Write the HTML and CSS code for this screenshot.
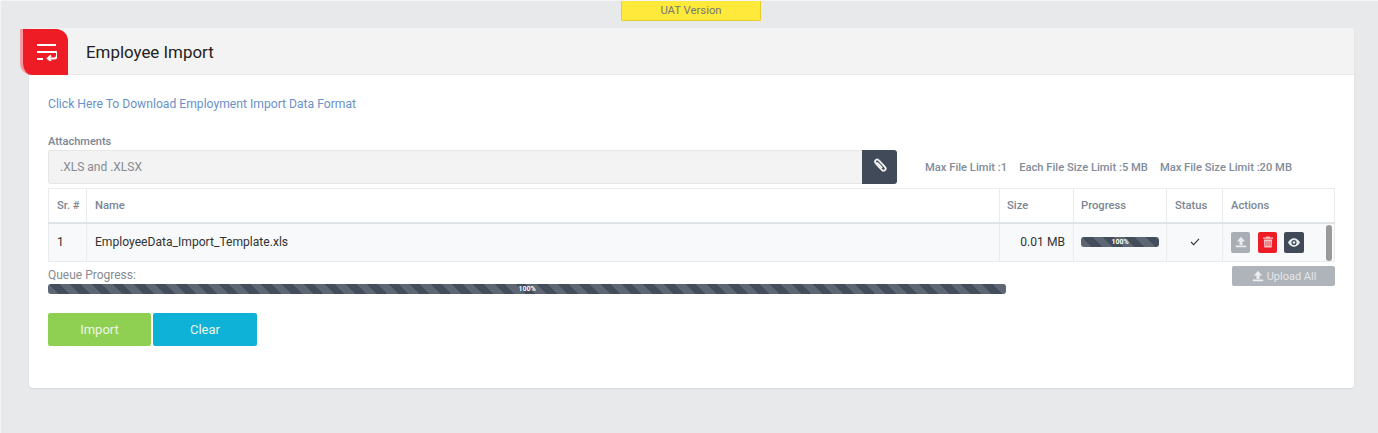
FILE: index.html
```html
<!DOCTYPE html>
<html lang="en">
<head>
  <meta charset="UTF-8" />
  <title>Employee Import</title>
  <link rel="stylesheet" href="styles.css">
</head>
<body>
  <div class="uat">UAT Version</div>

  <div class="card">
    <div class="card-head">
      <div class="head-icon">
        <svg width="20" height="18" viewBox="0 0 20 18" fill="none" stroke="#fff" stroke-width="2">
          <path d="M0 2h19"/>
          <path d="M0 9h19c1 0 1 .5 1 1.500v1.500c0 2-1 3.500-3 3.500H11"/>
          <path d="M0 16h6"/>
          <path d="M14 12.500l-3.200 3 3.200 2.500"/>
        </svg>
      </div>
      <h1>Employee Import</h1>
    </div>

    <div class="card-body">
      <a class="download" href="#">Click Here To Download Employment Import Data Format</a>

      <label class="attach-label">Attachments</label>
      <div class="attach-row">
        <div class="attach-input">.XLS and .XLSX</div>
        <button class="attach-btn">
          <svg width="14" height="15" viewBox="0 0 14 15">
            <path d="M2.200 1.700c1.100-1.100 2.800-1.100 3.900 0l6.300 6.800c1.200 1.300 1.200 3 .1 4.100s-2.900 1-4-.2L3.300 7.100c-.7-.8-.7-1.700-.1-2.300s1.500-.5 2.200.2l4 4.400-.9.800-4-4.300c-.4-.4-.7 0-.3.400l5.100 5.300c.7.700 1.700.8 2.300.2s.6-1.600-.1-2.400L5.200 2.600c-.6-.6-1.500-.6-2.100 0s-.6 1.500 0 2.100l-.9.900c-1.100-1.100-1.100-2.800 0-3.900z" fill="#fff" stroke="#fff" stroke-width=".6"/>
          </svg>
        </button>
        <div class="limits">
          <span>Max File Limit :1</span>
          <span>Each File Size Limit :5 MB</span>
          <span>Max File Size Limit :20 MB</span>
        </div>
      </div>

      <table class="files">
        <thead>
          <tr>
            <th class="c-sr">Sr. #</th>
            <th>Name</th>
            <th class="c-size">Size</th>
            <th class="c-prog">Progress</th>
            <th class="c-status">Status</th>
            <th class="c-act">Actions</th>
          </tr>
        </thead>
        <tbody>
          <tr>
            <td>1</td>
            <td>EmployeeData_Import_Template.xls</td>
            <td class="right">0.01 MB</td>
            <td class="prog-cell"><div class="bar bar-small">100%</div></td>
            <td class="center">
              <svg width="10" height="8" viewBox="0 0 11 9" fill="none" stroke="#333" stroke-width="1.200"><path d="M1 4.500l3 3 6-6.500"/></svg>
            </td>
            <td class="actions-cell">
              <div class="actions">
                <button class="act act-grey">
                  <svg width="14" height="14" viewBox="0 0 24 24"><path d="M3 21h18v-3H3v3zm2-10h4.500v6h5v-6H19l-7-8-7 8z" fill="#e9ebed"/></svg>
                </button>
                <button class="act act-red">
                  <svg width="10" height="12" viewBox="0 0 12 13"><path d="M4 0h4l.5 1H12v1.500H0V1h3.500L4 0zM1 3.500h10l-.6 9.500H1.600L1 3.500zm2 2v5.500h1V5.500H3zm2.500 0v5.500h1V5.500h-1zm2.500 0v5.500h1V5.500H8z" fill="#f7c6c8"/></svg>
                </button>
                <button class="act act-dark">
                  <svg width="12" height="9" viewBox="0 0 14 10"><path d="M7 0c3 0 5.500 2 7 5-1.500 3-4 5-7 5S1.500 8 0 5c1.500-3 4-5 7-5zm0 2a3 3 0 1 0 0 6 3 3 0 0 0 0-6zm0 1.500a1.500 1.500 0 1 1 0 3 1.500 1.500 0 0 1 0-3z" fill="#e9ebed"/></svg>
                </button>
              </div>
              <div class="scroll-thumb"></div>
            </td>
          </tr>
        </tbody>
      </table>

      <div class="queue">
        <div class="queue-left">
          <div class="queue-label">Queue Progress:</div>
          <div class="bar bar-queue">100%</div>
        </div>
        <button class="upload-all">
          <svg width="14" height="14" viewBox="0 0 24 24"><path d="M3 21h18v-3H3v3zm2-10h4.500v6h5v-6H19l-7-8-7 8z" fill="#eceef0"/></svg>
          Upload All
        </button>
      </div>

      <div class="form-btns">
        <button class="btn btn-import">Import</button>
        <button class="btn btn-clear">Clear</button>
      </div>
    </div>
  </div>
</body>
</html>
```

FILE: styles.css
```css
* {
  box-sizing: border-box;
}

body {
  margin: 0;
  padding: 0 24px 0 28px;
  height: 433px;
  overflow: hidden;
  border-top: 1px solid #f4f4f5;
  border-left: 1px solid #f4f4f5;
  font-family: Roboto, "Liberation Sans", sans-serif;
  background: #e8e9eb;
  color: #333;
}

button {
  font-family: inherit;
  border: none;
  cursor: pointer;
}

.uat {
  width: 140px;
  height: 20px;
  margin-left: 592px;
  background: #ffe93b;
  border: 1px solid #e6cf2a;
  border-top: none;
  border-radius: 0 0 2px 2px;
  color: #777;
  font-size: 11.300px;
  line-height: 20px;
  text-align: center;
}

.card {
  margin-top: 7px;
  height: 360px;
  background: #fff;
  border-radius: 4px;
  box-shadow: 0 1px 2px rgba(0, 0, 0, 0.08);
}

.card-head {
  display: flex;
  align-items: flex-end;
  height: 47px;
  background: #f3f3f3;
  border-bottom: 1px solid #e9e9e9;
  border-radius: 4px 4px 0 0;
}

.head-icon {
  display: flex;
  align-items: center;
  justify-content: center;
  flex: none;
  width: 48px;
  height: 46px;
  margin-left: -9px;
  margin-bottom: -1px;
  padding-left: 3px;
  background: #ee1c25;
  border-left: 3px solid #f29aa0;
  border-radius: 0 12px 0 12px;
}

.card-head h1 {
  align-self: center;
  margin: 2px 0 0 18px;
  font-size: 16.900px;
  font-weight: 400;
  color: #222;
}

.card-body {
  padding: 22px 19px 0;
}

.download {
  display: block;
  height: 15px;
  font-size: 12.150px;
  line-height: 15px;
  color: #6b92c9;
  text-decoration: none;
}

.attach-label {
  display: block;
  margin-top: 23px;
  font-size: 11px;
  line-height: 13px;
  font-weight: 500;
  color: #7b8594;
}

.attach-row {
  display: flex;
  align-items: center;
  margin-top: 2px;
}

.attach-input {
  width: 814px;
  height: 34px;
  padding-left: 11px;
  background: #f3f3f3;
  border: 1px solid #e6e6e6;
  border-right: none;
  border-radius: 3px 0 0 3px;
  font-size: 12px;
  line-height: 32px;
  color: #868b92;
}

.attach-btn {
  display: flex;
  align-items: center;
  justify-content: center;
  width: 35px;
  height: 34px;
  padding: 0 0 3px;
  background: #404a58;
  border-radius: 0 3px 3px 0;
}

.limits {
  display: flex;
  gap: 12px;
  margin-left: 28px;
  font-size: 11.200px;
  font-weight: 500;
  color: #838c99;
}

.files {
  width: 1287px;
  margin-top: 4px;
  border-collapse: collapse;
  table-layout: fixed;
  font-size: 12.100px;
}

.files th,
.files td {
  border: 1px solid #e8ecee;
  padding: 0 8px;
}

.files th {
  height: 34px;
  border-bottom: 2px solid #dfe3e6;
  font-size: 11.200px;
  font-weight: 500;
  text-align: left;
  white-space: nowrap;
  color: #7b8594;
}

.files td {
  height: 39px;
  background: #f8f9fa;
  color: #333;
}

.c-sr { width: 38px; }
.c-size { width: 74px; }
.c-prog { width: 93px; }
.c-status { width: 56px; }
.c-act { width: 112px; }

.files th.c-size,
.files th.c-prog,
.files td.prog-cell {
  padding-left: 7px;
}

.files td.prog-cell {
  padding-right: 7px;
}

.right { text-align: right; }
.center { text-align: center; }

.bar {
  background-color: #434d5b;
  background-image: repeating-linear-gradient(45deg, #5f6673 0 7.500px, #434d5b 7.500px 15px);
  border-radius: 3px;
  font-size: 7px;
  font-weight: 700;
  text-align: center;
  color: #fff;
}

.bar-small {
  height: 10px;
  line-height: 10px;
}

.bar-queue {
  width: 958px;
  height: 10px;
  line-height: 10px;
}

.actions-cell {
  position: relative;
}

.actions {
  display: flex;
  gap: 8px;
}

.act {
  display: flex;
  align-items: center;
  justify-content: center;
  width: 19px;
  height: 21px;
  padding: 0;
  border-radius: 2px;
}

.act-grey { background: #a9aeb5; }
.act-red { background: #ee1c25; }
.act-dark { width: 20px; margin-left: -1px; background: #404a58; }

/* scrollbar of the inner list, lies over the cell */
.scroll-thumb {
  position: absolute;
  top: 1px;
  right: 2px;
  width: 6px;
  height: 36px;
  border-radius: 3px;
  background: #9a9a9a;
}

.queue {
  display: flex;
  justify-content: space-between;
  align-items: flex-start;
  margin-top: 4px;
}

.queue-label {
  font-size: 12px;
  line-height: 14px;
  margin-bottom: 2px;
  margin-top: 2px;
  color: #868b92;
}

.upload-all {
  display: flex;
  align-items: center;
  justify-content: center;
  gap: 2px;
  width: 103px;
  height: 20px;
  padding: 0;
  background: #afb4ba;
  border-radius: 2px;
  font-size: 11px;
  color: #e4e6e8;
}

.form-btns {
  display: flex;
  gap: 2px;
  margin-top: 19px;
}

.btn {
  width: 103px;
  height: 33px;
  border-radius: 2px;
  font-size: 13px;
  color: #eef5e6;
}

.btn-import { background: #8fd053; }
.btn-clear { width: 104px; background: #0db2d6; }
```
